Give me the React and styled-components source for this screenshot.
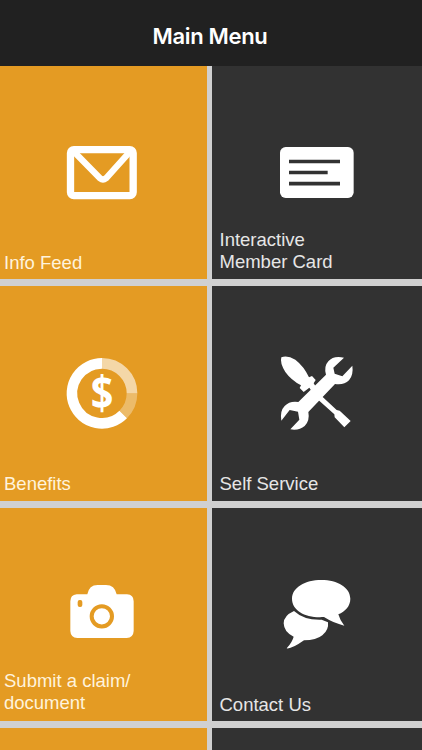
import React from 'react';
import styled, { createGlobalStyle } from 'styled-components';

const GlobalStyle = createGlobalStyle`
  body {
    margin: 0;
    background: #d0d0d0;
  }
`;

const StyledScreen = styled.div`
  display: flex;
  flex-direction: column;
  width: 422px;
  height: 750px;
  overflow: hidden;
  background: #d0d0d0;
`;

const StyledHeader = styled.header`
  display: flex;
  flex: none;
  align-items: center;
  justify-content: center;
  box-sizing: border-box;
  height: 66px;
  padding: 6px 2px 0 0;
  background: #212121;
`;

const StyledTitle = styled.h1`
  margin: 0;
  color: #fff;
  font-family: Inter, 'Liberation Sans', sans-serif;
  font-size: 22px;
  font-weight: 600;
  line-height: 28px;
  letter-spacing: -0.35px;
`;

const StyledMenu = styled.main`
  display: grid;
  flex: 1;
  grid-template-columns: 207px 210px;
  grid-template-rows: 213px 215px 213px 22px;
  gap: 7px 5px;
`;

const StyledTile = styled.div`
  display: flex;
  flex-direction: column;
  box-sizing: border-box;
  padding: ${({ $top }) => $top}px 0 ${({ $bottom }) => $bottom}px;
  background: ${({ $dark }) => ($dark ? '#323232' : '#e49b23')};
`;

const StyledIcon = styled.svg`
  flex: none;
  width: 92px;
  height: 92px;
  margin-left: ${({ $left }) => $left}px;
  color: #fff;
`;

const StyledLabel = styled.span`
  margin-top: auto;
  padding-left: ${({ $dark }) => ($dark ? 7.5 : 4)}px;
  color: ${({ $dark }) => ($dark ? '#e6e6e6' : '#fff3dc')};
  font-family: 'Liberation Sans', Arial, sans-serif;
  font-size: 18.5px;
  line-height: 22px;
  white-space: pre-line;
`;

const MailIcon = () => (
  <g>
    <rect x="43.5" y="44" width="188" height="138" rx="10" fill="none" stroke="currentColor" strokeWidth="22" />
    <path
      d="M54 50 L132 130 Q141 137 150 130 L222 50"
      fill="none"
      stroke="currentColor"
      strokeWidth="19"
      strokeLinejoin="round"
    />
  </g>
);

const CardIcon = () => (
  <g>
    <rect x="30" y="36" width="221" height="153" rx="17" fill="currentColor" />
    <path d="M57 79.5H210M57 112.5H173M57 146H210" stroke="#323232" strokeWidth="11" />
  </g>
);

const BenefitsIcon = () => (
  <g>
    <g fill="none" stroke="currentColor" strokeWidth="32">
      <path d="M138 49 A90 90 0 0 1 228 139" opacity="0.6" />
      <path d="M228 139 A90 90 0 0 1 201.6 202.6" opacity="0.32" />
      <path d="M201.6 202.6 A90 90 0 1 1 138 49" />
    </g>
    <text
      transform="translate(138 189) scale(0.86 1)"
      fill="currentColor"
      fontFamily="'Open Sans', 'Noto Sans', sans-serif"
      fontSize="138"
      fontWeight="700"
      textAnchor="middle"
    >
      $
    </text>
  </g>
);

const ToolsIcon = () => (
  <g fill="currentColor">
    {/* screwdriver */}
    <path d="M34 31 Q52 24 76 38 Q102 58 117 91 L126 87 L137 99 L131 109 L154 146 L200 189 L209 191 L242 222 L223 241 L194 211 L193 202 L141 155 L118 122 L101 135 L89 123 L93 115 Q64 100 46 75 Q29 48 34 31 Z" />
    {/* wrench */}
    <path d="M222 32 Q190 25 175 43 Q161 58 168 83 L85 165 Q59 161 44 177 Q29 192 34 221 L59 189 L84 194 L88 218 L61 247 Q88 251 104 237 Q120 221 115 195 L195 111 Q222 115 237 100 Q251 83 247 56 L217 88 L194 80 L190 62 Z" />
  </g>
);

const CameraIcon = () => (
  <g>
    <path
      d="M62 73 H94 Q99 45 125 45 H150 Q176 45 182 73 H213 Q233 74 233 94 V183 Q232 203 212 204 H64 Q44 203 43 183 V94 Q43 75 62 73 Z"
      fill="currentColor"
    />
    <circle cx="137.500" cy="139" r="30.500" fill="none" stroke="#e49b23" strokeWidth="12" />
    <rect x="65" y="90" width="14" height="21" rx="6" fill="#e49b23" />
  </g>
);

const ChatIcon = () => (
  <g fill="currentColor">
    <path d="M72 123 Q41 137 41 160 Q42 187 71 200 Q67 216 50 235 Q64 238 102 211 Q139 211 157 196 Q177 180 174 157 L155 149 Q102 151 72 123 Z" />
    <path d="M154 30 C203 30 241 53 241 86 C241 108 226 124 205 133 Q209 149 223 167 Q190 159 162 141 C109 145 66 123 66 86 C66 53 105 30 154 30 Z" />
  </g>
);

const menuItems = [
  { label: 'Info Feed', icon: MailIcon, top: 69, bottom: 5 },
  { label: 'Interactive\nMember Card', icon: CardIcon, top: 69, bottom: 6, dark: true },
  { label: 'Benefits', icon: BenefitsIcon, top: 61, bottom: 6 },
  { label: 'Self Service', icon: ToolsIcon, top: 61, bottom: 6, dark: true },
  { label: 'Submit a claim/\ndocument', icon: CameraIcon, top: 62, bottom: 7 },
  { label: 'Contact Us', icon: ChatIcon, top: 62, bottom: 5, dark: true },
];

const MenuTile = ({ label, icon: Icon, top, bottom, dark }) => (
  <StyledTile $dark={dark} $top={top} $bottom={bottom}>
    <StyledIcon $left={dark ? 58 : 56} viewBox="0 0 276 276" aria-hidden="true">
      <Icon />
    </StyledIcon>
    <StyledLabel $dark={dark}>{label}</StyledLabel>
  </StyledTile>
);

const App = () => (
  <StyledScreen>
    <GlobalStyle />
    <StyledHeader>
      <StyledTitle>Main Menu</StyledTitle>
    </StyledHeader>
    <StyledMenu>
      {menuItems.map(item => (
        <MenuTile key={item.label} {...item} />
      ))}
      <StyledTile $top={0} $bottom={0} />
      <StyledTile $top={0} $bottom={0} $dark />
    </StyledMenu>
  </StyledScreen>
);

export default App;
